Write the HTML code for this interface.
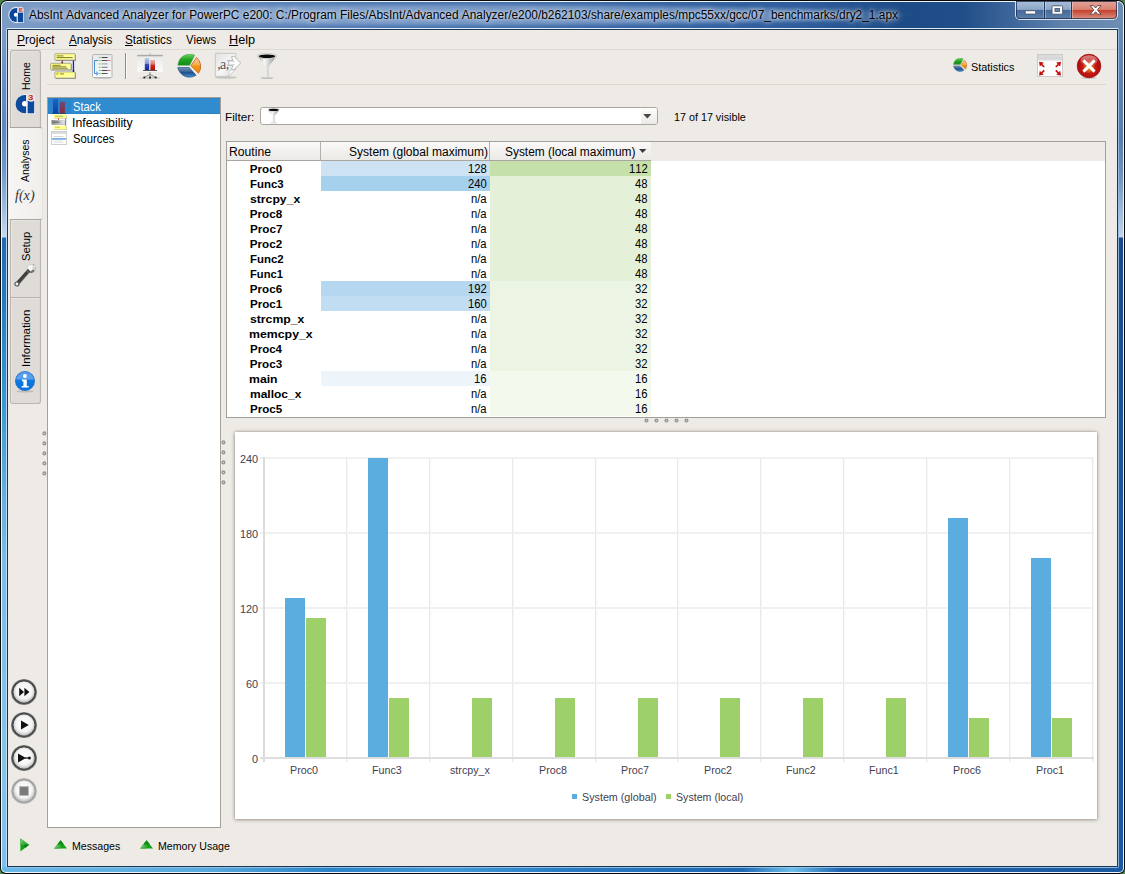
<!DOCTYPE html>
<html>
<head>
<meta charset="utf-8">
<title>AbsInt Advanced Analyzer</title>
<style>
html,body{margin:0;padding:0;}
body{width:1125px;height:874px;overflow:hidden;background:#4a8450;font-family:"Liberation Sans",sans-serif;font-size:11px;color:#000;position:relative;}
.a{position:absolute;}
.t{position:absolute;white-space:nowrap;transform-origin:0 0;font-kerning:none;font-variant-ligatures:none;}
#win{left:0;top:0;width:1125px;height:874px;border-radius:7px 7px 6px 6px;background:#0a0a0a;}
#glass{left:1px;top:1px;width:1123px;height:872px;border-radius:6px 6px 5px 5px;background:#eef4fb;}
#fr-top{left:2px;top:2px;width:1121px;height:26px;border-radius:5px 5px 0 0;
 background:linear-gradient(to right,#7d9dc6 0px,#7596c3 60px,#4f79b2 400px,#2d5c9c 800px,#1d4b86 900px,#1f4e88 960px,#3d669b 1010px,#5f82ab 1060px,#6d8db3 1121px);}
#fr-left{left:2px;top:28px;width:5px;height:840px;
 background:linear-gradient(to bottom,#7d9dc6 0,#678dc0 60px,#5f87bd 100px,#6f96c6 140px,#9dbcdc 180px,#c6daee 209px,#2169b3 210px,#2478c0 265px,#3a98d2 375px,#5eaede 460px,#78bee6 535px,#86c4e6 735px,#7cc0ea 840px);}
#fr-right{left:1118px;top:28px;width:5px;height:840px;
 background:linear-gradient(to bottom,#6b8bb1 0,#5f83b0 70px,#5a7fae 110px,#7395bd 150px,#a3bdd8 185px,#c2d4e6 209px,#1a4a8c 210px,#1b4f92 300px,#1b59a0 500px,#1b5aa1 840px);}
#fr-bottom{left:2px;top:867px;width:1121px;height:5px;border-radius:0 0 4px 4px;
 background:linear-gradient(to right,#6ab8e6 0,#5aacde 200px,#2c84c8 330px,#4498d6 450px,#2a7cc4 560px,#1f68b4 740px,#6ec0ea 790px,#1f62ae 840px,#1b5aa1 1121px);}
#inner-light{left:6px;top:28px;width:1111px;height:838px;border:1px solid;border-color:rgba(222,234,248,.92) rgba(150,190,230,.9) rgba(150,195,235,.9) rgba(200,222,245,.9);border-radius:2px;}
#inner-dark{left:7px;top:29px;width:1109px;height:836px;border:1px solid #1b3554;}
#client{left:8px;top:30px;width:1109px;height:836px;background:#eeebe6;}
#ttl-glow{left:14px;top:3px;width:900px;height:24px;border-radius:12px;
 background:radial-gradient(ellipse 50% 50% at 50% 50%,rgba(170,195,228,.42) 0,rgba(170,195,228,.38) 70%,rgba(190,210,235,0) 100%);}
.ttl{text-shadow:0 0 6px rgba(255,255,255,.85),0 0 10px rgba(255,255,255,.6),0 0 3px rgba(255,255,255,.5);}
#capbtns{left:1015px;top:1px;width:101px;height:18px;border:1px solid rgba(225,236,248,.92);border-top:none;border-radius:0 0 5px 5px;overflow:hidden;}
#capin{left:0;top:0;width:101px;height:18px;box-shadow:0 0 0 1px rgba(25,40,70,.75) inset;border-radius:0 0 4px 4px;}
.cb{position:absolute;top:0;height:18px;}
#cb-min{left:0;width:28px;background:linear-gradient(to bottom,#a9bfd9 0,#8ca7c8 47%,#44699a 50%,#5e81aa 100%);}
#cb-max{left:29px;width:26px;background:linear-gradient(to bottom,#a9bfd9 0,#8ca7c8 47%,#44699a 50%,#5e81aa 100%);}
#cb-close{left:56px;width:45px;background:linear-gradient(to bottom,#e2a59a 0,#d98373 47%,#c63f2b 50%,#d27866 85%,#dc9a8c 100%);}
.cbsep{position:absolute;top:0;width:1px;height:18px;background:rgba(25,40,70,.8);box-shadow:1px 0 0 rgba(255,255,255,.35),-1px 0 0 rgba(255,255,255,.25);}
.menu u{text-decoration:underline;text-underline-offset:1.2px;text-decoration-thickness:1px;}
.vtab{position:absolute;left:10px;width:29px;border:1px solid #b9b6b1;background:#dfdcd8;box-shadow:inset 1px 1px 0 #e7e4e0,inset -1px 0 0 #dad7d3;}
.vtab.sel{left:9px;width:32px;border-color:#a9a6a2 #e6e3de #a9a6a2 #fbf9f6;border-radius:0 3px 3px 0;background:linear-gradient(to right,#f7f5f3,#f1efec);box-shadow:none;}
.vt{position:absolute;white-space:nowrap;transform:rotate(-90deg);transform-origin:0 0;font-size:11.5px;line-height:14px;}
.hline{position:absolute;height:1px;background:#d9d6d0;}
.ybox{position:absolute;background:linear-gradient(135deg,#ffff66,#ffffa8);border:1px solid #8c8c70;box-shadow:1px 1px 1px rgba(0,0,0,.45);box-sizing:border-box;}
#tree{left:47px;top:97px;width:172px;height:729px;background:#fff;border:1px solid #a3a09b;}
#treesel{left:48px;top:98px;width:172px;height:16px;background:#308ccf;box-shadow:inset 0 1px 0 #2b82c4,inset 0 -1px 0 #2b82c4;}
#treeselic{left:48px;top:98px;width:23px;height:16px;background:#2b84c9;}
#combo{left:260px;top:107px;width:396px;height:16px;background:#fff;border:1px solid #a9a6a1;border-radius:3px;}
#combobtn{left:641px;top:108px;width:16px;height:16px;border-radius:0 2px 2px 0;background:linear-gradient(to bottom,#fdfdfc,#eceae7);}
#tbl{left:226px;top:141px;width:878px;height:275px;background:#fff;border:1px solid #a3a09b;}
#thead{left:227px;top:142px;width:424px;height:18px;background:linear-gradient(to bottom,#fbfaf9 0,#f3f1ef 50%,#ebe9e5 100%);border-bottom:1px solid #a9a6a2;}
#thead2{left:651px;top:142px;width:454px;height:19px;background:#eeebe7;}
.cdiv{position:absolute;top:142px;width:1px;height:18px;background:#b4b1ac;}
.cell{position:absolute;height:15px;}
.b{font-weight:700;}
#chart{left:235px;top:432px;width:862px;height:387px;background:#fff;box-shadow:0 0 3px rgba(90,80,70,.55),0 1px 4px rgba(90,80,70,.3);}
.gl{position:absolute;background:#f0f0f0;}
.bb{position:absolute;background:#5caddf;}
.gb{position:absolute;background:#9dd068;}
.dot{position:absolute;width:1.4px;height:1.4px;border-radius:50%;border:.9px solid #9f9c98;background:#e6e3df;box-sizing:content-box;}
.rb{position:absolute;left:11px;width:26px;height:26px;}

</style>
</head>
<body>
<div class="a" id="win"></div><div class="a" id="glass"></div>
<div class="a" id="fr-top"></div><div class="a" id="fr-left"></div><div class="a" id="fr-right"></div><div class="a" id="fr-bottom"></div>
<div class="a" id="inner-light"></div><div class="a" id="inner-dark"></div>
<div class="a" id="client"></div>
<div class="a" id="ttl-glow"></div><svg class="a" style="left:4px;top:3px" width="24" height="24" viewBox="0 0 24 24">
 <path d="M13.2 5 A7.05 7.05 0 1 0 13.2 19 Z" fill="none" stroke="#fff" stroke-width="2.2" opacity=".72"/>
 <rect x="13.9" y="9.6" width="5.1" height="9.4" fill="none" stroke="#fff" stroke-width="1.8" opacity=".6"/>
 <circle cx="16.6" cy="6.9" r="3.1" fill="#fff" opacity=".8"/>
 <path d="M13.2 5 A7.05 7.05 0 1 0 13.2 19 Z" fill="#0a479a"/>
 <rect x="13.9" y="9.6" width="5.1" height="9.4" fill="#0a479a"/>
 <circle cx="11.8" cy="11.8" r="1.95" fill="#fff"/>
 <rect x="12.6" y="12" width=".9" height="7" fill="#dfe8f3" opacity=".9"/>
 <rect x="14.8" y="4.9" width="3.5" height="3.9" fill="#d2402e"/>
 <path d="M15.4 5.9 H17.5 V6.9 H16.2 M17.5 6.9 V7.9 H15.4" stroke="#f2c8c0" stroke-width=".55" fill="none"/>
</svg><div class="t ttl" style="font-size:13.08px;line-height:15px;left:29.08px;top:7.00px;transform:scaleX(0.9104);">AbsInt Advanced Analyzer for PowerPC e200: C:/Program Files/AbsInt/Advanced Analyzer/e200/b262103/share/examples/mpc55xx/gcc/07_benchmarks/dry2_1.apx</div><div class="a" id="capbtns">
 <div class="cb" id="cb-min"></div>
 <div class="cb" id="cb-max"></div>
 <div class="cb" id="cb-close"></div>
 <div class="cbsep" style="left:28px"></div><div class="cbsep" style="left:55px"></div>
 <div class="a" id="capin"></div>
 <svg class="a" style="left:0;top:-1px" width="101" height="20" viewBox="0 0 101 20">
  <rect x="9.2" y="10.7" width="10.4" height="3.4" rx=".8" fill="#fff" stroke="#46556c" stroke-width=".9"/>
  <rect x="36" y="5.8" width="10.6" height="8.4" rx=".8" fill="#fff" stroke="#46556c" stroke-width=".9"/>
  <rect x="39" y="8.6" width="4.6" height="2.8" fill="#6a88ae" stroke="#46556c" stroke-width=".9"/>
  <path d="M74.2 5.6 H77.6 L79.6 8 L81.6 5.6 H85 L81.4 9.9 L85 14.2 H81.6 L79.6 11.8 L77.6 14.2 H74.2 L77.8 9.9 Z" fill="#fff" stroke="#5a4040" stroke-width=".9" stroke-linejoin="round"/>
 </svg>
</div><div class="t menu" style="font-size:13.08px;line-height:15px;left:17.11px;top:32.00px;transform:scaleX(0.9231);"><u>P</u>roject</div><div class="t menu" style="font-size:13.08px;line-height:15px;left:68.88px;top:32.00px;transform:scaleX(0.8878);"><u>A</u>nalysis</div><div class="t menu" style="font-size:13.08px;line-height:15px;left:125.47px;top:32.00px;transform:scaleX(0.8934);"><u>S</u>tatistics</div><div class="t menu" style="font-size:13.08px;line-height:15px;left:186.05px;top:32.00px;transform:scaleX(0.8615);">Views</div><div class="t menu" style="font-size:13.08px;line-height:15px;left:228.96px;top:32.00px;transform:scaleX(0.9692);"><u>H</u>elp</div><div class="hline" style="left:8px;top:49px;width:1109px;background:#dedbd6"></div><div class="vtab" style="top:50px;height:76px;border-bottom:none;border-radius:3px 3px 0 0"></div><div class="vtab" style="top:220px;height:77px;border-top:none;border-bottom-color:#b5b2ad"></div><div class="vtab" style="top:298px;height:105px;border-top:none;border-radius:0 0 3px 3px"></div><div class="vtab sel" style="top:127px;height:91px"></div><div class="t" style="font-size:11.63px;line-height:13px;left:19.00px;top:89.96px;transform:rotate(-90deg) scaleX(0.8967);">Home</div><div class="t" style="font-size:11.63px;line-height:13px;left:17.90px;top:181.82px;transform:rotate(-90deg) scaleX(0.9027);">Analyses</div><div class="t" style="font-size:11.63px;line-height:13px;left:19.00px;top:260.71px;transform:rotate(-90deg) scaleX(0.9600);">Setup</div><div class="t" style="font-size:11.63px;line-height:13px;left:19.00px;top:367.46px;transform:rotate(-90deg) scaleX(0.9867);">Information</div><svg class="a" style="left:12px;top:92px" width="24" height="24" viewBox="0 0 24 24"><g>
 <path d="M14.1 2.7 A9.3 9.3 0 1 0 14.1 21.3 Z" fill="#fff" opacity=".75" stroke="#fff" stroke-width="1.6" stroke-linejoin="round"/>
 <rect x="15.6" y="8.5" width="6.6" height="12.8" fill="#fff" opacity=".75" stroke="#fff" stroke-width="1.6"/>
 <path d="M14.1 3 A9.2 9.2 0 1 0 14.1 21.25 Z" fill="#0b4a9c"/>
 <rect x="15.6" y="8.5" width="6.6" height="12.8" fill="#0b4a9c"/>
 <circle cx="12.7" cy="11.8" r="2.7" fill="#fff"/>
 <circle cx="19" cy="5.4" r="4.3" fill="#e8e5e1"/>
 <text x="16.1" y="8" font-size="7.2" font-family="Liberation Sans" fill="#c8281e" font-weight="bold" textLength="5.4" lengthAdjust="spacingAndGlyphs">3</text>
</g></svg><div class="t" style="font-size:14px;line-height:15px;left:15.14px;top:188.40px;transform:scaleX(1.0085);color:#333;font-family:'Liberation Serif';font-style:italic;">f(x)</div><svg class="a" style="left:13px;top:262px" width="24" height="26" viewBox="0 0 24 26">
 <defs><linearGradient id="wg" x1="0" y1="0" x2="1" y2="1"><stop offset="0" stop-color="#9c9c9c"/><stop offset=".45" stop-color="#3a3a3a"/><stop offset="1" stop-color="#8c8c8c"/></linearGradient></defs>
 <path d="M2.6 20.8 L13.2 8.8 L15.9 11.2 L5.4 23.2 Z" fill="url(#wg)"/>
 <circle cx="3.9" cy="22" r="2" fill="#f4f4f4" stroke="#5a5a5a" stroke-width="1.2"/>
 <circle cx="18.2" cy="6.6" r="4.1" fill="#f6f6f6" stroke="#b0b0b0" stroke-width=".5"/>
 <path d="M14.2 7.6 A4.1 4.1 0 0 0 21.9 8.6 L20 7.2 L17.6 9.6 L15.4 8.2 Z" fill="#5a5a5a" opacity=".85"/>
 <path d="M13.2 8.8 L15 6.8 L17.8 10 L15.9 11.2 Z" fill="#4e4e4e"/>
 <path d="M18.8 6.2 L20.6 2.2 L23.8 5.6 L20.6 7.6 Z" fill="#dfdcd8"/>
 <path d="M19.9 3.2 L21.4 2.7 M21.8 7.2 L22.7 5.6" stroke="#6a7a6a" stroke-width=".7"/>
</svg><svg class="a" style="left:14px;top:370px" width="22" height="24" viewBox="0 0 22 24">
 <defs><linearGradient id="ig" x1="0" y1="0" x2="0" y2="1"><stop offset="0" stop-color="#2f86e4"/><stop offset=".5" stop-color="#0c78e2"/><stop offset="1" stop-color="#0a72dc"/></linearGradient>
 <linearGradient id="igl" x1="0" y1="0" x2="0" y2="1"><stop offset="0" stop-color="#fff" stop-opacity=".2"/><stop offset="1" stop-color="#fff" stop-opacity=".3"/></linearGradient></defs>
 <ellipse cx="11" cy="21.4" rx="8.5" ry="1.1" fill="#000" opacity=".14"/>
 <circle cx="11" cy="11" r="9.6" fill="url(#ig)" stroke="#0b5cc0" stroke-width=".6"/>
 <path d="M2.2 9.6 A8.9 8.9 0 0 1 19.8 9.6 Z" fill="url(#igl)"/>
 <circle cx="10.9" cy="6" r="1.9" fill="#fff"/>
 <path d="M8 9.6 H12.8 V16 H14.6 V17.6 H7.6 V16 H9.4 V11.2 H8 Z" fill="#fff"/>
</svg><svg class="a" style="left:49px;top:52px" width="29" height="28" viewBox="0 0 29 28">
 <defs><linearGradient id="yg" x1="0" y1="0" x2="1" y2="1"><stop offset="0" stop-color="#ffff6e"/><stop offset="1" stop-color="#ffffb4"/></linearGradient></defs>
 <g fill="#000" opacity=".32"><rect x="6.6" y="2.4" width="20.4" height="6.6" rx=".6"/><rect x="2.4" y="12" width="20.6" height="6.6" rx=".6"/><rect x="6.6" y="20.6" width="20.4" height="6.4" rx=".6"/></g>
 <g fill="url(#yg)" stroke="#8e8e78" stroke-width=".7"><rect x="5.9" y="1.7" width="20.2" height="6.4" rx=".5"/><rect x="1.7" y="11.3" width="20.4" height="6.4" rx=".5"/><rect x="5.9" y="19.9" width="20.2" height="6.2" rx=".5"/></g>
 <rect x="23.8" y="8.6" width="1.3" height="11" fill="#1414f0"/>
 <rect x="12.7" y="8.5" width="1.1" height="2.8" fill="#8a2a2a"/>
 <path d="M24.4 20.2 l-1.2 -1.8 h2.4 Z M13.2 11.6 l-1 -1.4 h2 Z" fill="#222"/>
 <g fill="#5e5e22" opacity=".75"><rect x="7.6" y="3.4" width="7" height="1"/><rect x="7.6" y="5" width="16" height="1.1"/><rect x="3.6" y="12.8" width="8" height="1"/><rect x="3.2" y="14.3" width="14" height="1.1"/><rect x="3.4" y="15.8" width="15.4" height=".9"/><rect x="7.4" y="21.4" width="2" height="1"/><rect x="11" y="21.4" width="4" height="1"/></g>
</svg><svg class="a" style="left:92px;top:54px" width="21" height="26" viewBox="0 0 21 26">
 <defs><linearGradient id="pg" x1="0" y1="0" x2="0" y2="1"><stop offset="0" stop-color="#e6e8ec"/><stop offset="1" stop-color="#fafafa"/></linearGradient></defs>
 <ellipse cx="10.5" cy="24" rx="9" ry="1" fill="#000" opacity=".15"/>
 <rect x=".5" y=".5" width="19.5" height="23" rx="1" fill="url(#pg)" stroke="#b4b4b4"/>
 <rect x="6.6" y="3" width="2.2" height="1" fill="#7fd07a"/><rect x="9.6" y="3" width="6" height="1" fill="#444"/><rect x="6.6" y="6" width="2.2" height="1" fill="#7fd07a"/><rect x="9.6" y="6" width="6" height="1" fill="#555"/><rect x="15.8" y="6" width="2.6" height="1" fill="#e07070"/><rect x="6.6" y="9.4" width="2.2" height="1" fill="#7fd07a"/><rect x="9.6" y="9.4" width="6" height="1" fill="#999"/><rect x="6.6" y="12.8" width="2.2" height="1" fill="#7fd07a"/><rect x="9.6" y="12.8" width="6" height="1" fill="#777"/><rect x="6.6" y="16" width="2.2" height="1" fill="#7fd07a"/><rect x="9.6" y="16" width="6" height="1" fill="#444"/><rect x="15.8" y="16" width="2.6" height="1" fill="#e07070"/><rect x="6.6" y="19" width="2.2" height="1" fill="#7fd07a"/><rect x="9.6" y="19" width="6" height="1" fill="#555"/>
 <path d="M6 6.5 H2.5 V19.5 H5" fill="none" stroke="#4a90d9" stroke-width="1"/>
 <path d="M4 17.6 L6.3 19.5 L4 21.4" fill="none" stroke="#4a90d9" stroke-width="1"/>
</svg><div class="a" style="left:125px;top:53px;width:1px;height:26px;background:#8f8c87"></div><div class="a" style="left:126px;top:53px;width:1px;height:26px;background:#fbfaf8"></div><svg class="a" style="left:136px;top:53px" width="28" height="27" viewBox="0 0 28 27">
 <defs>
  <linearGradient id="sc" x1="0" y1="0" x2="0" y2="1"><stop offset="0" stop-color="#e9e9ea"/><stop offset="1" stop-color="#fbfbfb"/></linearGradient>
  <linearGradient id="bb" x1="0" y1="0" x2="0" y2="1"><stop offset="0" stop-color="#bcd0ea"/><stop offset=".48" stop-color="#7f8fd4"/><stop offset=".52" stop-color="#3a4cb4"/><stop offset="1" stop-color="#0b2a9c"/></linearGradient>
  <linearGradient id="rb" x1="0" y1="0" x2="0" y2="1"><stop offset="0" stop-color="#e8b0a8"/><stop offset=".42" stop-color="#d87a70"/><stop offset=".5" stop-color="#c83228"/><stop offset="1" stop-color="#b40a0a"/></linearGradient>
 </defs>
 <ellipse cx="14" cy="25" rx="11" ry="1.2" fill="#000" opacity=".12"/>
 <rect x="1.2" y="3" width="25.6" height="15.6" fill="url(#sc)"/>
 <rect x="1.2" y="1.8" width="25.6" height="1.5" fill="#a9a9a9"/>
 <rect x="13.6" y=".6" width=".9" height="1.4" fill="#999"/>
 <rect x="8.8" y="5" width="4.4" height="12" fill="url(#bb)"/>
 <rect x="14.4" y="7" width="4.6" height="10" fill="url(#rb)"/>
 <rect x="7" y="17" width="14" height="1" fill="#555"/>
 <path d="M14 19 V24 M14 21.5 L8.4 24.3 M14 21.5 L19.6 24.3" stroke="#777" stroke-width=".8" fill="none"/>
 <circle cx="8.3" cy="24.5" r="1.1" fill="#222"/><circle cx="14" cy="24.6" r="1.1" fill="#222"/><circle cx="19.7" cy="24.5" r="1.1" fill="#222"/>
</svg><svg class="a" style="left:176.5px;top:53.5px" width="25.5" height="25" viewBox="0 0 25.5 25"><defs>
 <linearGradient id="pgna" x1="0" y1="0" x2="0" y2="1"><stop offset="0" stop-color="#6fd36a"/><stop offset=".5" stop-color="#1fa51d"/><stop offset="1" stop-color="#14891a"/></linearGradient>
 <linearGradient id="pbla" x1="0" y1="0" x2="0" y2="1"><stop offset="0" stop-color="#7d96b4"/><stop offset=".4" stop-color="#3b659a"/><stop offset=".55" stop-color="#1f4f8a"/><stop offset="1" stop-color="#4a9be0"/></linearGradient>
 <linearGradient id="pora" x1="0" y1="0" x2="0" y2="1"><stop offset="0" stop-color="#f8cf8e"/><stop offset=".5" stop-color="#f3ad48"/><stop offset=".52" stop-color="#ee960f"/><stop offset="1" stop-color="#ea8c0a"/></linearGradient>
</defs>
<path d="M12.6 11.2 L.9 11.2 A11.8 11.8 0 0 1 17.6 1.2 Z" fill="url(#pgna)" stroke="#2a9a2a" stroke-width=".5"/>
<path d="M12.2 13.6 L.8 13.6 A11.9 11.9 0 0 0 19 21.2 Z" fill="url(#pbla)" stroke="#1d4a80" stroke-width=".7"/>
<path d="M13.9 11.7 L19.6 3.5 A11.6 11.6 0 0 1 21.5 19.2 Z" fill="url(#pora)" stroke="#c8481c" stroke-width=".7"/>
</svg><svg class="a" style="left:214px;top:52px" width="28" height="28" viewBox="0 0 28 28">
 <defs><linearGradient id="dg" x1="0" y1="0" x2="1" y2="1"><stop offset="0" stop-color="#e2e2e2"/><stop offset=".55" stop-color="#f6f6f6"/><stop offset="1" stop-color="#dcdcdc"/></linearGradient></defs>
 <ellipse cx="12" cy="25.4" rx="11" ry="1.4" fill="#000" opacity=".16"/>
 <path d="M1.3 1.3 H21.8 V17 L14.6 24.4 H1.3 Z" fill="url(#dg)" stroke="#bdbdbd" stroke-width=".8"/>
 <text x="3.2" y="17.4" font-family="Liberation Serif" font-size="14" fill="#555" letter-spacing="-.6">,a,</text>
 <path d="M14.6 24.4 L15.4 18.4 L21.8 17 Z" fill="#fafafa" stroke="#bdbdbd" stroke-width=".6"/>
 <path d="M13.4 8.4 H19 L17.4 4.8 L20 4.2 L26.6 11 L20 17.8 L17.4 17.2 L19 13.6 H13.4 L15 11 Z" fill="#fff" stroke="#a8a8a8" stroke-width=".8" stroke-linejoin="round"/>
 <path d="M14.4 9.6 H21 M14.4 12.4 H21" stroke="#c4c4c4" stroke-width=".7"/>
</svg><svg class="a" style="left:255.8px;top:52.6px" width="22" height="27" viewBox="0 0 22 27"><defs><linearGradient id="fga" x1="0" y1="0" x2="1" y2="0"><stop offset="0" stop-color="#9a9a9a"/><stop offset=".35" stop-color="#fafafa"/><stop offset=".6" stop-color="#d0d0d0"/><stop offset="1" stop-color="#8c8c8c"/></linearGradient></defs>
 <ellipse cx="11" cy="25" rx="6.5" ry="1.1" fill="#000" opacity=".18"/>
 <path d="M1.2 3 L9 13 V24.6 H13 V13 L20.8 3 Z" fill="url(#fga)"/>
 <ellipse cx="11" cy="3" rx="9.9" ry="2.7" fill="#e2e2e2" stroke="#b8b8b8" stroke-width=".5"/>
 <ellipse cx="11" cy="3.2" rx="8.2" ry="1.8" fill="#0a0a0a"/></svg><div class="hline" style="left:47px;top:84px;width:1059px"></div><svg class="a" style="left:952.8px;top:58.4px" width="14.8" height="14.6" viewBox="0 0 25.5 25"><defs>
 <linearGradient id="pgnb" x1="0" y1="0" x2="0" y2="1"><stop offset="0" stop-color="#6fd36a"/><stop offset=".5" stop-color="#1fa51d"/><stop offset="1" stop-color="#14891a"/></linearGradient>
 <linearGradient id="pblb" x1="0" y1="0" x2="0" y2="1"><stop offset="0" stop-color="#7d96b4"/><stop offset=".4" stop-color="#3b659a"/><stop offset=".55" stop-color="#1f4f8a"/><stop offset="1" stop-color="#4a9be0"/></linearGradient>
 <linearGradient id="porb" x1="0" y1="0" x2="0" y2="1"><stop offset="0" stop-color="#f8cf8e"/><stop offset=".5" stop-color="#f3ad48"/><stop offset=".52" stop-color="#ee960f"/><stop offset="1" stop-color="#ea8c0a"/></linearGradient>
</defs>
<path d="M12.6 11.2 L.9 11.2 A11.8 11.8 0 0 1 17.6 1.2 Z" fill="url(#pgnb)" stroke="#2a9a2a" stroke-width=".5"/>
<path d="M12.2 13.6 L.8 13.6 A11.9 11.9 0 0 0 19 21.2 Z" fill="url(#pblb)" stroke="#1d4a80" stroke-width=".7"/>
<path d="M13.9 11.7 L19.6 3.5 A11.6 11.6 0 0 1 21.5 19.2 Z" fill="url(#porb)" stroke="#c8481c" stroke-width=".7"/>
</svg><div class="t" style="font-size:11.63px;line-height:13px;left:971.31px;top:60.00px;transform:scaleX(0.9346);">Statistics</div><svg class="a" style="left:1037px;top:54px" width="26" height="23" viewBox="0 0 26 23">
 <rect x=".5" y=".5" width="25" height="22" fill="#fff" stroke="#cbcbcb"/>
 <rect x="1" y="1" width="24" height="5.6" fill="#dcdcdc"/>
 <rect x="1" y="3.4" width="24" height="1" fill="#cfd3d8" opacity=".8"/>
 <g fill="#c41212" stroke="none">
  <path d="M2 7.8 L6.8 8.6 L5.4 10 L7.8 12.4 L6.6 13.6 L4.2 11.2 L2.8 12.6 Z"/>
  <path d="M24 7.8 L19.2 8.6 L20.6 10 L18.2 12.4 L19.4 13.6 L21.8 11.2 L23.2 12.6 Z"/>
  <path d="M2 21.6 L6.8 20.8 L5.4 19.4 L7.8 17 L6.6 15.8 L4.2 18.2 L2.8 16.8 Z"/>
  <path d="M24 21.6 L19.2 20.8 L20.6 19.4 L18.2 17 L19.4 15.8 L21.8 18.2 L23.2 16.8 Z"/>
 </g>
</svg><svg class="a" style="left:1076px;top:52.5px" width="26" height="27" viewBox="0 0 26 27">
 <defs><radialGradient id="cg" cx=".5" cy=".55" r=".5"><stop offset="0" stop-color="#f0a020"/><stop offset=".3" stop-color="#dc6a1a"/><stop offset=".55" stop-color="#c21a14"/><stop offset="1" stop-color="#b00c0c"/></radialGradient>
 <linearGradient id="cgl" x1="0" y1="0" x2="0" y2="1"><stop offset="0" stop-color="#fff" stop-opacity=".5"/><stop offset="1" stop-color="#fff" stop-opacity=".08"/></linearGradient></defs>
 <ellipse cx="13" cy="25" rx="8" ry="1.1" fill="#000" opacity=".12"/>
 <circle cx="13" cy="13" r="11.8" fill="url(#cg)" stroke="#9a0a0a" stroke-width=".7"/>
 <ellipse cx="13" cy="7.6" rx="8.6" ry="5.4" fill="url(#cgl)"/>
 <path d="M7.4 7.4 L18.6 18.6 M18.6 7.4 L7.4 18.6" stroke="#fff" stroke-width="2.9" stroke-linecap="butt"/>
</svg><div class="a" id="tree"></div><div class="a" id="treesel"></div><div class="a" id="treeselic"></div><svg class="a" style="left:51px;top:98px" width="16" height="16" viewBox="0 0 16 16">
 <defs><linearGradient id="sb" x1="0" y1="0" x2="0" y2="1"><stop offset="0" stop-color="#1c62c2"/><stop offset="1" stop-color="#0d3fa8"/></linearGradient>
 <linearGradient id="sr" x1="0" y1="0" x2="0" y2="1"><stop offset="0" stop-color="#6a4a78"/><stop offset="1" stop-color="#93283c"/></linearGradient></defs>
 <rect x="2" y="1" width="5" height="14.4" fill="url(#sb)"/>
 <rect x="8.7" y="3.7" width="5.2" height="11.7" fill="url(#sr)"/>
 <rect x="1" y="15.2" width="14" height=".8" fill="#14457f"/>
</svg><svg class="a" style="left:51px;top:114px" width="17" height="16" viewBox="0 0 17 16">
 <defs><linearGradient id="ig2" x1="0" y1="0" x2="1" y2="0"><stop offset="0" stop-color="#8c8c8c"/><stop offset="1" stop-color="#e2e2e2"/></linearGradient></defs>
 <rect x="3.2" y="1" width="12.8" height="3.6" fill="#6a6a50" opacity=".45"/>
 <rect x="2.7" y=".5" width="12.8" height="3.6" fill="#ffff8a"/>
 <rect x="4" y="1.8" width="8" height=".8" fill="#7a7a30" opacity=".7"/>
 <rect x=".9" y="6.4" width="13.2" height="4.6" fill="#555" opacity=".4"/>
 <rect x=".4" y="6" width="13.2" height="4.4" fill="url(#ig2)"/>
 <rect x="1.4" y="7.4" width="7" height="1.6" fill="#555" opacity=".55"/>
 <rect x="3.2" y="12.3" width="12.8" height="3.6" fill="#6a6a50" opacity=".45"/>
 <rect x="2.7" y="11.8" width="12.8" height="3.6" fill="#ffff8a"/>
 <rect x="4" y="12.8" width="5" height=".7" fill="#8a8a30" opacity=".6"/>
 <rect x="14.2" y="4.4" width="1" height="7.2" fill="#4a7fd0"/>
 <rect x="7" y="4.2" width=".9" height="1.8" fill="#d05030"/>
</svg><svg class="a" style="left:51px;top:131px" width="16" height="14" viewBox="0 0 16 14">
 <rect x=".5" y=".5" width="15" height="13" fill="#fff" stroke="#cfcfcf"/>
 <rect x="1" y="1" width="14" height="2" fill="#dcdcdc"/>
 <rect x="2.6" y="5" width="10" height=".8" fill="#d0d0d0"/>
 <rect x="1" y="7.2" width="14" height="1.4" fill="#5b9bd5"/>
 <rect x="2.6" y="9.6" width="9" height=".7" fill="#d0d0d0"/><rect x="2.6" y="11.4" width="10" height=".7" fill="#d8d8d8"/>
</svg><div class="t" style="font-size:13.08px;line-height:15px;left:73.40px;top:99.00px;transform:scaleX(0.8464);color:#fff;">Stack</div><div class="t" style="font-size:13.08px;line-height:15px;left:71.87px;top:115.00px;transform:scaleX(0.9374);">Infeasibility</div><div class="t" style="font-size:13.08px;line-height:15px;left:73.09px;top:131.00px;transform:scaleX(0.8611);">Sources</div><div class="t" style="font-size:11.63px;line-height:13px;left:224.74px;top:110.00px;transform:scaleX(1.0089);">Filter:</div><div class="a" id="combo"></div><div class="a" id="combobtn"></div><svg class="a" style="left:642.6px;top:114.2px" width="9" height="5" viewBox="0 0 9 5"><path d="M.2 0 H8.4 L4.3 4.6 Z" fill="#484848"/></svg><svg class="a" style="left:267.2px;top:108.2px" width="13.4" height="16" viewBox="0 0 22 27"><defs><linearGradient id="fgb" x1="0" y1="0" x2="1" y2="0"><stop offset="0" stop-color="#9a9a9a"/><stop offset=".35" stop-color="#fafafa"/><stop offset=".6" stop-color="#d0d0d0"/><stop offset="1" stop-color="#8c8c8c"/></linearGradient></defs>
 <ellipse cx="11" cy="25" rx="6.5" ry="1.1" fill="#000" opacity=".18"/>
 <path d="M1.2 3 L9 13 V24.6 H13 V13 L20.8 3 Z" fill="url(#fgb)"/>
 <ellipse cx="11" cy="3" rx="9.9" ry="2.7" fill="#e2e2e2" stroke="#b8b8b8" stroke-width=".5"/>
 <ellipse cx="11" cy="3.2" rx="8.2" ry="1.8" fill="#0a0a0a"/></svg><div class="t" style="font-size:11.63px;line-height:13px;left:673.98px;top:110.00px;transform:scaleX(0.9254);">17 of 17 visible</div><div class="a" id="tbl"></div><div class="a" id="thead"></div><div class="a" id="thead2"></div><div class="cdiv" style="left:320px"></div><div class="cdiv" style="left:489px"></div><div class="t" style="font-size:13.08px;line-height:15px;left:228.80px;top:144.00px;transform:scaleX(0.9302);">Routine</div><div class="t" style="font-size:13.08px;line-height:15px;left:349.05px;top:144.00px;transform:scaleX(0.9200);">System (global maximum)</div><div class="t" style="font-size:13.08px;line-height:15px;left:505.26px;top:144.00px;transform:scaleX(0.9114);">System (local maximum)</div><svg class="a" style="left:639px;top:149.2px" width="8" height="4" viewBox="0 0 8 4"><path d="M0 0 H7.4 L3.7 4 Z" fill="#3c3c3c"/></svg><div class="cell" style="left:321px;top:161px;width:169px;background:#cde3f4"></div><div class="cell" style="left:490px;top:161px;width:161px;background:#c5e1a9"></div><div class="t" style="font-size:11.63px;line-height:13px;left:249.82px;top:162.00px;font-weight:700;">Proc0</div><div class="t" style="font-size:13.08px;line-height:15px;left:467.94px;top:161.00px;transform:scaleX(0.8589);">128</div><div class="t" style="font-size:13.08px;line-height:15px;left:629.22px;top:161.00px;transform:scaleX(0.8589);">112</div><div class="cell" style="left:321px;top:176px;width:169px;background:#a6d1ed"></div><div class="cell" style="left:490px;top:176px;width:161px;background:#e4f0d8"></div><div class="t" style="font-size:11.63px;line-height:13px;left:249.84px;top:177.00px;transform:scaleX(0.9803);font-weight:700;">Func3</div><div class="t" style="font-size:13.08px;line-height:15px;left:467.89px;top:176.00px;transform:scaleX(0.8589);">240</div><div class="t" style="font-size:13.08px;line-height:15px;left:635.39px;top:176.00px;transform:scaleX(0.8589);">48</div><div class="cell" style="left:490px;top:191px;width:161px;background:#e4f0d8"></div><div class="t" style="font-size:11.63px;line-height:13px;left:249.87px;top:192.00px;transform:scaleX(1.0497);font-weight:700;">strcpy_x</div><div class="t" style="font-size:13.08px;line-height:15px;left:470.58px;top:191.00px;transform:scaleX(0.8589);">n/a</div><div class="t" style="font-size:13.08px;line-height:15px;left:635.39px;top:191.00px;transform:scaleX(0.8589);">48</div><div class="cell" style="left:490px;top:206px;width:161px;background:#e4f0d8"></div><div class="t" style="font-size:11.63px;line-height:13px;left:249.82px;top:207.00px;font-weight:700;">Proc8</div><div class="t" style="font-size:13.08px;line-height:15px;left:470.58px;top:206.00px;transform:scaleX(0.8589);">n/a</div><div class="t" style="font-size:13.08px;line-height:15px;left:635.39px;top:206.00px;transform:scaleX(0.8589);">48</div><div class="cell" style="left:490px;top:221px;width:161px;background:#e4f0d8"></div><div class="t" style="font-size:11.63px;line-height:13px;left:249.82px;top:222.00px;transform:scaleX(1.0021);font-weight:700;">Proc7</div><div class="t" style="font-size:13.08px;line-height:15px;left:470.58px;top:221.00px;transform:scaleX(0.8589);">n/a</div><div class="t" style="font-size:13.08px;line-height:15px;left:635.39px;top:221.00px;transform:scaleX(0.8589);">48</div><div class="cell" style="left:490px;top:236px;width:161px;background:#e4f0d8"></div><div class="t" style="font-size:11.63px;line-height:13px;left:249.82px;top:237.00px;font-weight:700;">Proc2</div><div class="t" style="font-size:13.08px;line-height:15px;left:470.58px;top:236.00px;transform:scaleX(0.8589);">n/a</div><div class="t" style="font-size:13.08px;line-height:15px;left:635.39px;top:236.00px;transform:scaleX(0.8589);">48</div><div class="cell" style="left:490px;top:251px;width:161px;background:#e4f0d8"></div><div class="t" style="font-size:11.63px;line-height:13px;left:249.84px;top:252.00px;transform:scaleX(0.9817);font-weight:700;">Func2</div><div class="t" style="font-size:13.08px;line-height:15px;left:470.58px;top:251.00px;transform:scaleX(0.8589);">n/a</div><div class="t" style="font-size:13.08px;line-height:15px;left:635.39px;top:251.00px;transform:scaleX(0.8589);">48</div><div class="cell" style="left:490px;top:266px;width:161px;background:#e4f0d8"></div><div class="t" style="font-size:11.63px;line-height:13px;left:249.85px;top:267.00px;transform:scaleX(0.9594);font-weight:700;">Func1</div><div class="t" style="font-size:13.08px;line-height:15px;left:470.58px;top:266.00px;transform:scaleX(0.8589);">n/a</div><div class="t" style="font-size:13.08px;line-height:15px;left:635.39px;top:266.00px;transform:scaleX(0.8589);">48</div><div class="cell" style="left:321px;top:281px;width:169px;background:#b5d8f0"></div><div class="cell" style="left:490px;top:281px;width:161px;background:#ecf5e3"></div><div class="t" style="font-size:11.63px;line-height:13px;left:249.82px;top:282.00px;font-weight:700;">Proc6</div><div class="t" style="font-size:13.08px;line-height:15px;left:468.02px;top:281.00px;transform:scaleX(0.8589);">192</div><div class="t" style="font-size:13.08px;line-height:15px;left:635.47px;top:281.00px;transform:scaleX(0.8589);">32</div><div class="cell" style="left:321px;top:296px;width:169px;background:#c0ddf2"></div><div class="cell" style="left:490px;top:296px;width:161px;background:#ecf5e3"></div><div class="t" style="font-size:11.63px;line-height:13px;left:249.83px;top:297.00px;transform:scaleX(0.9961);font-weight:700;">Proc1</div><div class="t" style="font-size:13.08px;line-height:15px;left:467.89px;top:296.00px;transform:scaleX(0.8589);">160</div><div class="t" style="font-size:13.08px;line-height:15px;left:635.47px;top:296.00px;transform:scaleX(0.8589);">32</div><div class="cell" style="left:490px;top:311px;width:161px;background:#ecf5e3"></div><div class="t" style="font-size:11.63px;line-height:13px;left:249.87px;top:312.00px;transform:scaleX(1.0503);font-weight:700;">strcmp_x</div><div class="t" style="font-size:13.08px;line-height:15px;left:470.58px;top:311.00px;transform:scaleX(0.8589);">n/a</div><div class="t" style="font-size:13.08px;line-height:15px;left:635.47px;top:311.00px;transform:scaleX(0.8589);">32</div><div class="cell" style="left:490px;top:326px;width:161px;background:#ecf5e3"></div><div class="t" style="font-size:11.63px;line-height:13px;left:249.49px;top:327.00px;transform:scaleX(1.0595);font-weight:700;">memcpy_x</div><div class="t" style="font-size:13.08px;line-height:15px;left:470.58px;top:326.00px;transform:scaleX(0.8589);">n/a</div><div class="t" style="font-size:13.08px;line-height:15px;left:635.47px;top:326.00px;transform:scaleX(0.8589);">32</div><div class="cell" style="left:490px;top:341px;width:161px;background:#ecf5e3"></div><div class="t" style="font-size:11.63px;line-height:13px;left:249.83px;top:342.00px;transform:scaleX(0.9878);font-weight:700;">Proc4</div><div class="t" style="font-size:13.08px;line-height:15px;left:470.58px;top:341.00px;transform:scaleX(0.8589);">n/a</div><div class="t" style="font-size:13.08px;line-height:15px;left:635.47px;top:341.00px;transform:scaleX(0.8589);">32</div><div class="cell" style="left:490px;top:356px;width:161px;background:#ecf5e3"></div><div class="t" style="font-size:11.63px;line-height:13px;left:249.82px;top:357.00px;font-weight:700;">Proc3</div><div class="t" style="font-size:13.08px;line-height:15px;left:470.58px;top:356.00px;transform:scaleX(0.8589);">n/a</div><div class="t" style="font-size:13.08px;line-height:15px;left:635.47px;top:356.00px;transform:scaleX(0.8589);">32</div><div class="cell" style="left:321px;top:371px;width:169px;background:#edf5fb"></div><div class="cell" style="left:490px;top:371px;width:161px;background:#f4f9ee"></div><div class="t" style="font-size:11.63px;line-height:13px;left:249.49px;top:372.00px;transform:scaleX(1.0524);font-weight:700;">main</div><div class="t" style="font-size:13.08px;line-height:15px;left:474.20px;top:371.00px;transform:scaleX(0.8589);">16</div><div class="t" style="font-size:13.08px;line-height:15px;left:635.40px;top:371.00px;transform:scaleX(0.8589);">16</div><div class="cell" style="left:490px;top:386px;width:161px;background:#f4f9ee"></div><div class="t" style="font-size:11.63px;line-height:13px;left:249.51px;top:387.00px;transform:scaleX(1.0321);font-weight:700;">malloc_x</div><div class="t" style="font-size:13.08px;line-height:15px;left:470.58px;top:386.00px;transform:scaleX(0.8589);">n/a</div><div class="t" style="font-size:13.08px;line-height:15px;left:635.40px;top:386.00px;transform:scaleX(0.8589);">16</div><div class="cell" style="left:490px;top:401px;width:161px;background:#f4f9ee"></div><div class="t" style="font-size:11.63px;line-height:13px;left:249.83px;top:402.00px;transform:scaleX(0.9961);font-weight:700;">Proc5</div><div class="t" style="font-size:13.08px;line-height:15px;left:470.58px;top:401.00px;transform:scaleX(0.8589);">n/a</div><div class="t" style="font-size:13.08px;line-height:15px;left:635.40px;top:401.00px;transform:scaleX(0.8589);">16</div><div class="a" id="chart"></div><div class="gl" style="left:260px;top:457px;width:834px;height:2px"></div><div class="gl" style="left:260px;top:532px;width:834px;height:2px"></div><div class="gl" style="left:260px;top:607px;width:834px;height:2px"></div><div class="gl" style="left:260px;top:682px;width:834px;height:2px"></div><div class="gl" style="left:263px;top:457px;width:2px;height:305px;background:#dcdcdc;"></div><div class="gl" style="left:346px;top:457px;width:2px;height:305px;background:linear-gradient(to right,#eaeaea 50%,#f7f7f7 50%);"></div><div class="gl" style="left:429px;top:457px;width:2px;height:305px;background:linear-gradient(to right,#eaeaea 50%,#f7f7f7 50%);"></div><div class="gl" style="left:512px;top:457px;width:2px;height:305px;background:linear-gradient(to right,#eaeaea 50%,#f7f7f7 50%);"></div><div class="gl" style="left:595px;top:457px;width:2px;height:305px;background:linear-gradient(to right,#eaeaea 50%,#f7f7f7 50%);"></div><div class="gl" style="left:677px;top:457px;width:2px;height:305px;background:linear-gradient(to right,#eaeaea 50%,#f7f7f7 50%);"></div><div class="gl" style="left:760px;top:457px;width:2px;height:305px;background:linear-gradient(to right,#eaeaea 50%,#f7f7f7 50%);"></div><div class="gl" style="left:843px;top:457px;width:2px;height:305px;background:linear-gradient(to right,#eaeaea 50%,#f7f7f7 50%);"></div><div class="gl" style="left:926px;top:457px;width:2px;height:305px;background:linear-gradient(to right,#eaeaea 50%,#f7f7f7 50%);"></div><div class="gl" style="left:1009px;top:457px;width:2px;height:305px;background:linear-gradient(to right,#eaeaea 50%,#f7f7f7 50%);"></div><div class="gl" style="left:1092px;top:457px;width:2px;height:305px;background:linear-gradient(to right,#eaeaea 50%,#f7f7f7 50%);"></div><div class="gl" style="left:260px;top:757px;width:834px;height:2px;background:#dedede"></div><div class="bb" style="left:285px;top:598.4px;width:19.6px;height:159.1px"></div><div class="gb" style="left:306px;top:618.4px;width:19.6px;height:139.1px"></div><div class="t" style="font-size:11.63px;line-height:13px;left:289.91px;top:763.00px;transform:scaleX(0.9216);color:#3f4150;">Proc0</div><div class="bb" style="left:368px;top:458.4px;width:19.6px;height:299.1px"></div><div class="gb" style="left:389px;top:698.4px;width:19.6px;height:59.1px"></div><div class="t" style="font-size:11.63px;line-height:13px;left:371.92px;top:763.00px;transform:scaleX(0.9216);color:#3f4150;">Func3</div><div class="gb" style="left:472px;top:698.4px;width:19.6px;height:59.1px"></div><div class="t" style="font-size:11.63px;line-height:13px;left:449.86px;top:763.00px;transform:scaleX(0.9216);color:#3f4150;">strcpy_x</div><div class="gb" style="left:555px;top:698.4px;width:19.6px;height:59.1px"></div><div class="t" style="font-size:11.63px;line-height:13px;left:538.57px;top:763.00px;transform:scaleX(0.9216);color:#3f4150;">Proc8</div><div class="gb" style="left:638px;top:698.4px;width:19.6px;height:59.1px"></div><div class="t" style="font-size:11.63px;line-height:13px;left:621.49px;top:763.00px;transform:scaleX(0.9216);color:#3f4150;">Proc7</div><div class="gb" style="left:720px;top:698.4px;width:19.6px;height:59.1px"></div><div class="t" style="font-size:11.63px;line-height:13px;left:704.37px;top:763.00px;transform:scaleX(0.9216);color:#3f4150;">Proc2</div><div class="gb" style="left:803px;top:698.4px;width:19.6px;height:59.1px"></div><div class="t" style="font-size:11.63px;line-height:13px;left:786.36px;top:763.00px;transform:scaleX(0.9216);color:#3f4150;">Func2</div><div class="gb" style="left:886px;top:698.4px;width:19.6px;height:59.1px"></div><div class="t" style="font-size:11.63px;line-height:13px;left:869.23px;top:763.00px;transform:scaleX(0.9216);color:#3f4150;">Func1</div><div class="bb" style="left:948px;top:518.4px;width:19.6px;height:239.1px"></div><div class="gb" style="left:969px;top:718.4px;width:19.6px;height:39.1px"></div><div class="t" style="font-size:11.63px;line-height:13px;left:952.98px;top:763.00px;transform:scaleX(0.9216);color:#3f4150;">Proc6</div><div class="bb" style="left:1031px;top:558.4px;width:19.6px;height:199.1px"></div><div class="gb" style="left:1052px;top:718.4px;width:19.6px;height:39.1px"></div><div class="t" style="font-size:11.63px;line-height:13px;left:1035.88px;top:763.00px;transform:scaleX(0.9216);color:#3f4150;">Proc1</div><div class="t" style="font-size:11.63px;line-height:13px;left:240.35px;top:452.00px;transform:scaleX(0.9366);color:#3f4150;">240</div><div class="t" style="font-size:11.63px;line-height:13px;left:240.35px;top:527.00px;transform:scaleX(0.9366);color:#3f4150;">180</div><div class="t" style="font-size:11.63px;line-height:13px;left:240.35px;top:602.00px;transform:scaleX(0.9366);color:#3f4150;">120</div><div class="t" style="font-size:11.63px;line-height:13px;left:246.41px;top:677.00px;transform:scaleX(0.9366);color:#3f4150;">60</div><div class="t" style="font-size:11.63px;line-height:13px;left:252.47px;top:752.00px;transform:scaleX(0.9366);color:#3f4150;">0</div><div class="bb" style="left:572.3px;top:794px;width:5.2px;height:5px"></div><div class="gb" style="left:666.2px;top:794px;width:5.2px;height:5px"></div><div class="t" style="font-size:11.63px;line-height:13px;left:582.21px;top:790.00px;transform:scaleX(0.9240);color:#3f4150;">System (global)</div><div class="t" style="font-size:11.63px;line-height:13px;left:676.02px;top:790.00px;transform:scaleX(0.9141);color:#3f4150;">System (local)</div><svg class="a" style="left:640px;top:416px" width="54" height="9" viewBox="0 0 54 9"><circle cx="6.5" cy="4.5" r="1.35" fill="#d8d5d1" stroke="#979491" stroke-width="1.4"/><circle cx="16.5" cy="4.5" r="1.35" fill="#d8d5d1" stroke="#979491" stroke-width="1.4"/><circle cx="26.5" cy="4.5" r="1.35" fill="#d8d5d1" stroke="#979491" stroke-width="1.4"/><circle cx="36.5" cy="4.5" r="1.35" fill="#d8d5d1" stroke="#979491" stroke-width="1.4"/><circle cx="46.5" cy="4.5" r="1.35" fill="#d8d5d1" stroke="#979491" stroke-width="1.4"/></svg><svg class="a" style="left:219px;top:438px" width="9" height="50" viewBox="0 0 9 50"><circle cx="4.4" cy="4.4" r="1.35" fill="#d8d5d1" stroke="#979491" stroke-width="1.4"/><circle cx="4.4" cy="14.4" r="1.35" fill="#d8d5d1" stroke="#979491" stroke-width="1.4"/><circle cx="4.4" cy="24.4" r="1.35" fill="#d8d5d1" stroke="#979491" stroke-width="1.4"/><circle cx="4.4" cy="34.4" r="1.35" fill="#d8d5d1" stroke="#979491" stroke-width="1.4"/><circle cx="4.4" cy="44.4" r="1.35" fill="#d8d5d1" stroke="#979491" stroke-width="1.4"/></svg><svg class="a" style="left:40px;top:429px" width="9" height="50" viewBox="0 0 9 50"><circle cx="4.4" cy="4.4" r="1.35" fill="#d8d5d1" stroke="#979491" stroke-width="1.4"/><circle cx="4.4" cy="14.4" r="1.35" fill="#d8d5d1" stroke="#979491" stroke-width="1.4"/><circle cx="4.4" cy="24.4" r="1.35" fill="#d8d5d1" stroke="#979491" stroke-width="1.4"/><circle cx="4.4" cy="34.4" r="1.35" fill="#d8d5d1" stroke="#979491" stroke-width="1.4"/><circle cx="4.4" cy="44.4" r="1.35" fill="#d8d5d1" stroke="#979491" stroke-width="1.4"/></svg><svg class="rb" style="top:679px" viewBox="0 0 26 26"><defs><radialGradient id="rga" cx=".5" cy=".45" r=".55"><stop offset="0" stop-color="#fff"/><stop offset=".7" stop-color="#f4f4f4"/><stop offset="1" stop-color="#bdbdbd"/></radialGradient></defs>
<circle cx="13" cy="13" r="11.7" fill="none" stroke="#4c4c4c" stroke-width="2.7" opacity="1"/>
<circle cx="13" cy="13" r="10.4" fill="url(#rga)"/>
<circle cx="13" cy="13" r="12.9" fill="none" stroke="#fff" stroke-width=".6" opacity=".6"/><path d="M8.2 8.8 L13 13 L8.2 17.2 Z M13.4 8.8 L18.4 13 L13.4 17.2 Z" fill="#111"/></svg><svg class="rb" style="top:712px" viewBox="0 0 26 26"><defs><radialGradient id="rgb" cx=".5" cy=".45" r=".55"><stop offset="0" stop-color="#fff"/><stop offset=".7" stop-color="#f4f4f4"/><stop offset="1" stop-color="#bdbdbd"/></radialGradient></defs>
<circle cx="13" cy="13" r="11.7" fill="none" stroke="#4c4c4c" stroke-width="2.7" opacity="1"/>
<circle cx="13" cy="13" r="10.4" fill="url(#rgb)"/>
<circle cx="13" cy="13" r="12.9" fill="none" stroke="#fff" stroke-width=".6" opacity=".6"/><path d="M10 8.4 L17.8 13 L10 17.6 Z" fill="#111"/></svg><svg class="rb" style="top:745px" viewBox="0 0 26 26"><defs><radialGradient id="rgc" cx=".5" cy=".45" r=".55"><stop offset="0" stop-color="#fff"/><stop offset=".7" stop-color="#f4f4f4"/><stop offset="1" stop-color="#bdbdbd"/></radialGradient></defs>
<circle cx="13" cy="13" r="11.7" fill="none" stroke="#4c4c4c" stroke-width="2.7" opacity="1"/>
<circle cx="13" cy="13" r="10.4" fill="url(#rgc)"/>
<circle cx="13" cy="13" r="12.9" fill="none" stroke="#fff" stroke-width=".6" opacity=".6"/><path d="M7 8.4 L15 13 L7 17.6 Z" fill="#111"/><rect x="14" y="12.4" width="3" height="1.2" fill="#111"/><circle cx="18.4" cy="13" r="1.5" fill="#111"/></svg><svg class="rb" style="top:778px" viewBox="0 0 26 26"><defs><radialGradient id="rgd" cx=".5" cy=".45" r=".55"><stop offset="0" stop-color="#fff"/><stop offset=".7" stop-color="#f4f4f4"/><stop offset="1" stop-color="#bdbdbd"/></radialGradient></defs>
<circle cx="13" cy="13" r="11.7" fill="none" stroke="#9c9c9c" stroke-width="2.7" opacity=".9"/>
<circle cx="13" cy="13" r="10.4" fill="url(#rgd)"/>
<circle cx="13" cy="13" r="12.9" fill="none" stroke="#fff" stroke-width=".6" opacity=".6"/><rect x="8.4" y="8.4" width="9.2" height="9.2" fill="#8a8a8a"/><rect x="9.4" y="9.4" width="7.2" height="7.2" fill="#7a7a7a"/></svg><svg class="a" style="left:20px;top:838px" width="10" height="14" viewBox="0 0 10 14"><path d="M.4 .4 L9.2 6.8 L.4 13.6 Z" fill="#12a416"/><path d="M.4 .4 L9.2 6.8 L.4 6.8 Z" fill="#43b246"/><path d="M.4 .4 L3.4 2.6 L.4 6.8 Z" fill="#7cc87c" opacity=".7"/><path d="M4.2 6.2 L9.2 6.8 L5 10 Z" fill="#0a6a10" opacity=".8"/></svg><svg class="a" style="left:54px;top:840.4px" width="13.2" height="9" viewBox="0 0 13.2 9"><path d="M6.6 .2 L13 8.6 L.2 8.6 Z" fill="#12a416"/><path d="M6.6 .2 L9.9 4.6 L3.3 4.6 Z" fill="#0c8a12"/><path d="M3.3 4.6 L6.6 4.6 L6.6 8.6 L.2 8.6 Z" fill="#3fae42"/><path d="M.2 8.6 L3.3 4.6 L4.6 6.6 Z" fill="#7cc87c" opacity=".7"/></svg><svg class="a" style="left:140px;top:840.4px" width="13.2" height="9" viewBox="0 0 13.2 9"><path d="M6.6 .2 L13 8.6 L.2 8.6 Z" fill="#12a416"/><path d="M6.6 .2 L9.9 4.6 L3.3 4.6 Z" fill="#0c8a12"/><path d="M3.3 4.6 L6.6 4.6 L6.6 8.6 L.2 8.6 Z" fill="#3fae42"/><path d="M.2 8.6 L3.3 4.6 L4.6 6.6 Z" fill="#7cc87c" opacity=".7"/></svg><div class="t" style="font-size:11.63px;line-height:13px;left:71.63px;top:839.00px;transform:scaleX(0.9103);">Messages</div><div class="t" style="font-size:11.63px;line-height:13px;left:157.53px;top:839.00px;transform:scaleX(0.9124);">Memory Usage</div>
</body>
</html>
